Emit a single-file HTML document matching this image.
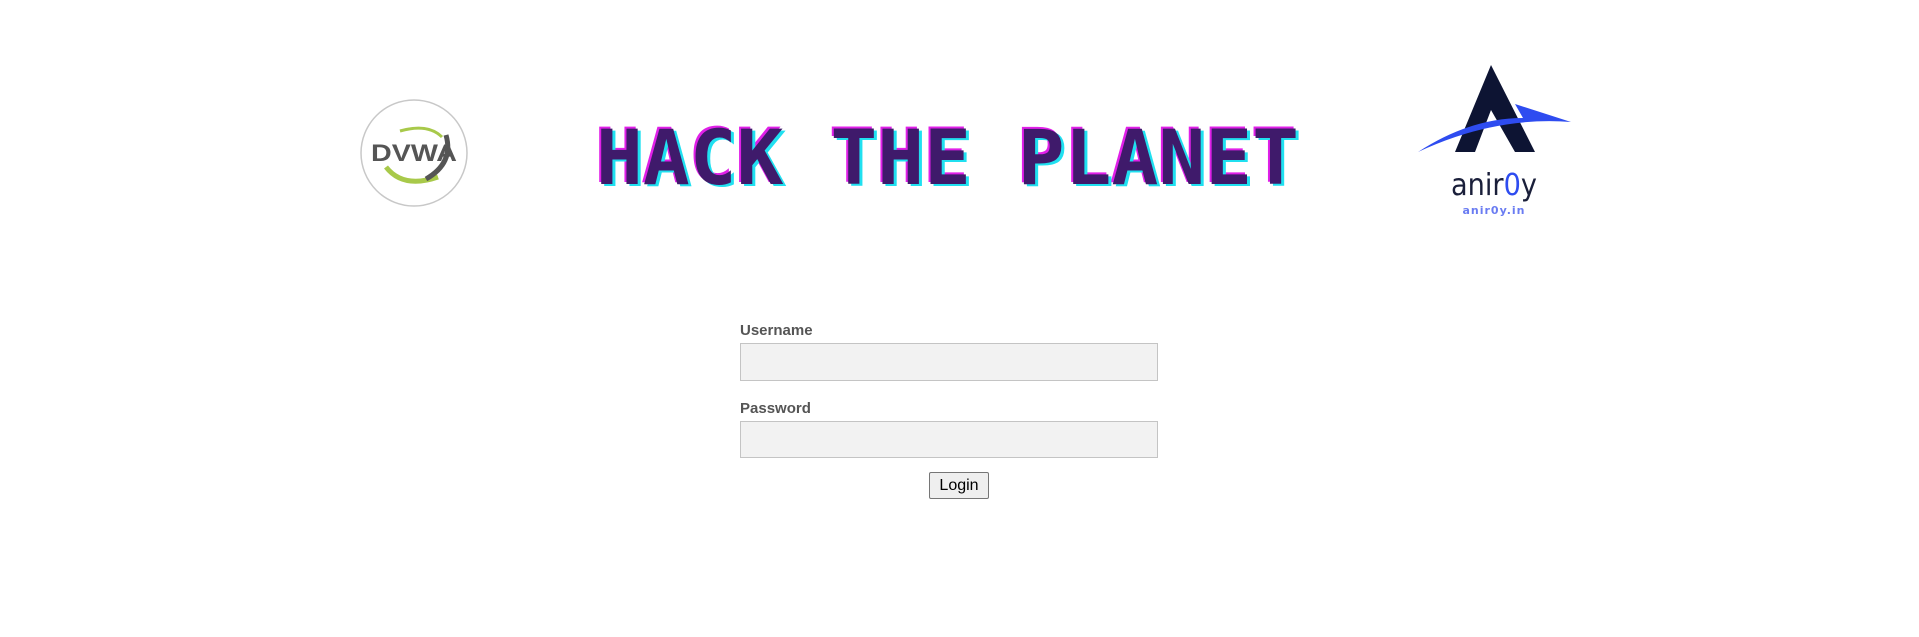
<!DOCTYPE html>
<html><head><meta charset="utf-8"><style>
body{margin:0;background:#fff;width:1919px;height:637px;position:relative;overflow:hidden;font-family:"Liberation Sans",Arial,sans-serif}
.abs{position:absolute}
label{position:absolute;font-weight:bold;font-size:15px;color:#555}
.inp{position:absolute;left:740px;width:418px;background:#f2f2f2;border:1px solid #c4c4c4;box-sizing:border-box}
.btn{position:absolute;left:929px;top:472px;width:60px;height:27px;box-sizing:border-box;border:1px solid #767676;border-radius:2px;background:#efefef;font-size:16px;text-align:center;line-height:25px;color:#000}
</style></head><body>
<svg class="abs" style="left:358px;top:97px" width="112" height="112" viewBox="0 0 112 112">
<circle cx="56" cy="56" r="53" fill="#fff" stroke="#c8c8c8" stroke-width="1.5"/>
<path d="M28 70 Q45 92 80 80" stroke="#a8c94a" stroke-width="5" fill="none"/>
<path d="M42 34 Q70 26 84 40" stroke="#a8c94a" stroke-width="3" fill="none"/>
<path d="M68 82 Q96 66 88 38" stroke="#555" stroke-width="5" fill="none"/>
<text x="56" y="64" text-anchor="middle" font-family="Liberation Sans" font-weight="bold" font-size="24" fill="#555" textLength="86" lengthAdjust="spacingAndGlyphs">DVWA</text>
</svg>
<svg class="abs" style="left:590px;top:118px" width="720" height="75">
<g font-family="DejaVu Sans Mono" font-weight="bold" font-size="76">
<text x="4" y="64" fill="#e020e8" textLength="703" lengthAdjust="spacingAndGlyphs">HACK THE PLANET</text>
<text x="9" y="68" fill="#20e0f0" textLength="703" lengthAdjust="spacingAndGlyphs">HACK THE PLANET</text>
<text x="6" y="66" fill="#3f1a6b" textLength="703" lengthAdjust="spacingAndGlyphs">HACK THE PLANET</text>
</g></svg>
<svg class="abs" style="left:1415px;top:60px" width="160" height="160">
<path d="M76 5 L40 92 L60 92 L76 50 L100 92 L120 92 Z" fill="#0d1433"/>
<path d="M3 92 Q55 58 108 58 L100 44 L156 62 Q80 56 3 92Z" fill="#2e4cf0"/>
<text x="79" y="135" text-anchor="middle" font-family="DejaVu Sans" font-size="30" fill="#1a1f3a" textLength="86" lengthAdjust="spacingAndGlyphs">anir<tspan fill="#2e4cf0">0</tspan>y</text>
<text x="79" y="154" text-anchor="middle" font-family="DejaVu Sans" font-weight="bold" font-size="11" fill="#6a7cf2" letter-spacing="1">anir0y.in</text>
</svg>
<label style="left:740px;top:322px">Username</label>
<div class="inp" style="top:343px;height:38px"></div>
<label style="left:740px;top:400px">Password</label>
<div class="inp" style="top:421px;height:37px"></div>
<div class="btn">Login</div>
</body></html>
